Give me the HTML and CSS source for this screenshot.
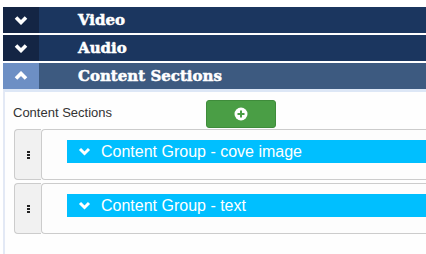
FILE: index.html
```html
<!DOCTYPE html>
<html lang="en">
<head>
  <meta charset="UTF-8">
  <title>Content Sections</title>
  <link rel="stylesheet" href="styles.css">
</head>
<body>
  <div class="page">
    <div class="panel-head">
      <div class="toggle">
        <svg width="14" height="10" viewBox="0 0 14 10"><polyline points="2,2.5 7,7.5 12,2.5" /></svg>
      </div>
      <div class="title">Video</div>
    </div>
    <div class="panel-head">
      <div class="toggle">
        <svg width="14" height="10" viewBox="0 0 14 10"><polyline points="2,2.5 7,7.5 12,2.5" /></svg>
      </div>
      <div class="title">Audio</div>
    </div>
    <div class="panel-head open">
      <div class="toggle">
        <svg width="14" height="10" viewBox="0 0 14 10"><polyline points="2,7.5 7,2.5 12,7.5" /></svg>
      </div>
      <div class="title">Content Sections</div>
    </div>

    <div class="panel-body">
      <div class="field">
        <label>Content Sections</label>
        <button class="add">
          <svg width="14" height="14" viewBox="0 0 14 14">
            <circle cx="7" cy="7" r="6.5" fill="#fff" />
            <path d="M7 3.5v7M3.5 7h7" stroke="#4a9e45" stroke-width="2" />
          </svg>
        </button>
      </div>

      <div class="groups">
        <div class="group">
          <div class="handle"><span></span><span></span><span></span></div>
          <div class="card">
            <div class="bar">
              <svg width="13" height="9" viewBox="0 0 13 9"><polyline points="2,2 6.5,6.5 11,2" /></svg>
              Content Group - cove image
            </div>
          </div>
        </div>
        <div class="group">
          <div class="handle"><span></span><span></span><span></span></div>
          <div class="card">
            <div class="bar">
              <svg width="13" height="9" viewBox="0 0 13 9"><polyline points="2,2 6.5,6.5 11,2" /></svg>
              Content Group - text
            </div>
          </div>
        </div>
      </div>
    </div>
  </div>
</body>
</html>
```

FILE: styles.css
```css
body {
  margin: 0;
  background: #fff;
  overflow: hidden;
  font-family: "Liberation Sans", Arial, sans-serif;
}
.page {
  padding: 7px 0 0 3px;
}
.panel-head {
  display: flex;
  height: 26px;
  margin-bottom: 2px;
  background: #1b365f;
}
.panel-head .toggle {
  width: 36px;
  display: flex;
  align-items: center;
  justify-content: center;
  background: #142544;
}
.panel-head svg polyline {
  fill: none;
  stroke: #fff;
  stroke-width: 3.6;
}
.panel-head .title {
  padding-left: 39px;
  line-height: 26px;
  color: #fff;
  font-family: "DejaVu Serif", serif;
  font-weight: bold;
  font-size: 15px;
  -webkit-text-stroke: 0.5px #fff;
}
.panel-head.open {
  background: #3d5a80;
  margin-bottom: 0;
}
.panel-head.open .toggle {
  background: #6d8fc4;
}
.panel-body {
  height: 163px;
  border-top: 3px solid #dde7f6;
  border-left: 2px solid #e3e9f5;
  background: #fefefe;
}
.field {
  display: flex;
  align-items: center;
  padding: 8px 0 0 8px;
}
.field label {
  width: 193px;
  margin-top: -3px;
  font-size: 13px;
  color: #333;
}
.add {
  width: 70px;
  height: 28px;
  display: flex;
  align-items: center;
  justify-content: center;
  background: #4a9e45;
  border: 1px solid #3f8c3b;
  border-radius: 3px;
  padding: 0;
}
.groups {
  display: flex;
  flex-direction: column;
  gap: 3px;
  padding: 1px 0 0 9px;
}
.group {
  display: flex;
  height: 51px;
}
.handle {
  width: 26px;
  display: flex;
  flex-direction: column;
  align-items: center;
  justify-content: center;
  gap: 1px;
  background: #f1f1f1;
  border: 1px solid #ccc;
  border-right: 0;
  border-radius: 4px 0 0 4px;
}
.handle span {
  width: 3px;
  height: 2px;
  background: #222;
}
.card {
  flex: 1;
  border: 1px solid #ccc;
  border-right: 0;
  border-radius: 4px 0 0 4px;
  background: #fdfdfd;
  padding: 10px 0 0 25px;
}
.bar {
  height: 23px;
  display: flex;
  align-items: center;
  gap: 10px;
  padding-left: 11px;
  background: #00bfff;
  color: #fff;
  font-size: 16px;
}
.bar svg polyline {
  fill: none;
  stroke: #fff;
  stroke-width: 3;
}
```
